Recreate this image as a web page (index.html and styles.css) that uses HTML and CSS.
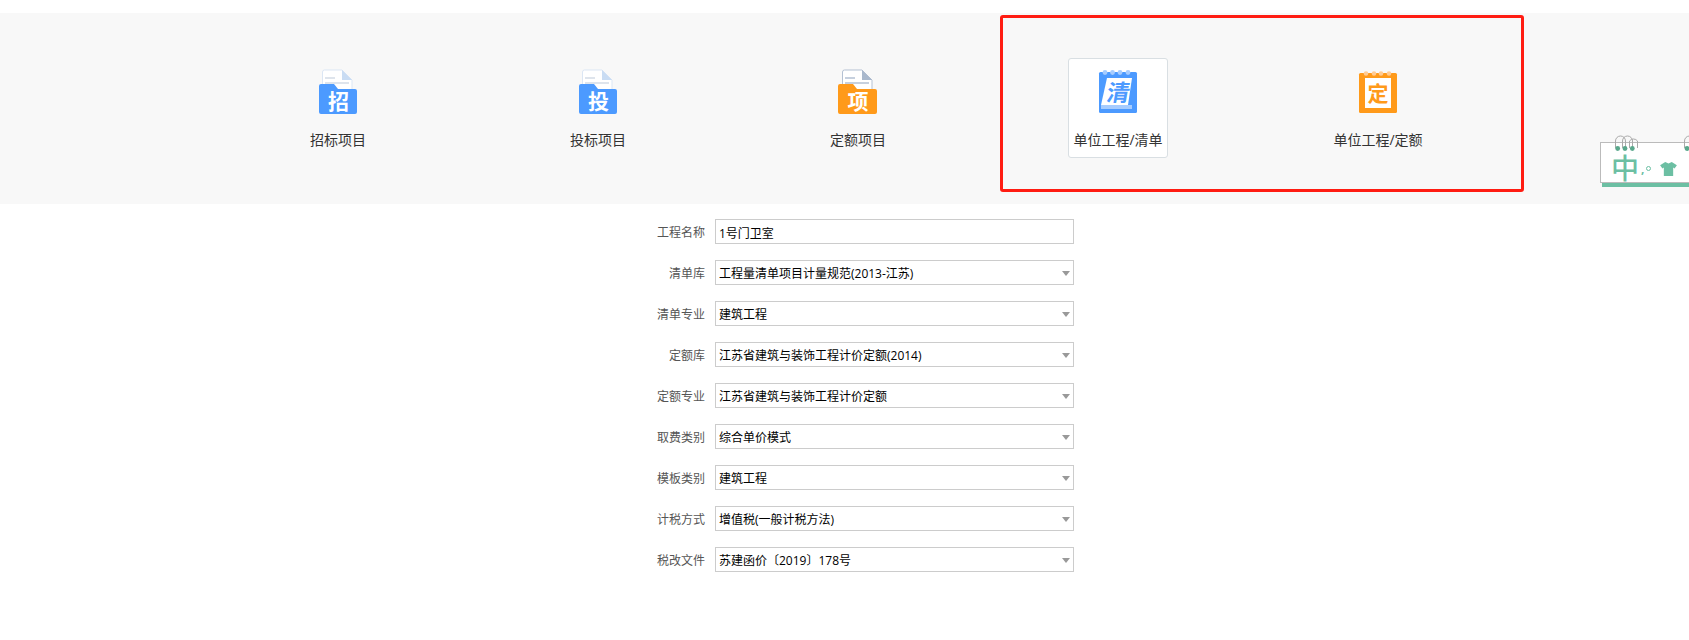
FILE: index.html
```html
<!DOCTYPE html>
<html lang="zh-CN">
<head>
<meta charset="utf-8">
<title>新建工程</title>
<link rel="stylesheet" href="styles.css">
</head>
<body>
<div class="page">
  <section class="band">
    <div class="tabs">
      <div class="tab">
        <svg class="icon" viewBox="0 0 48 48"><g class="folder-art"><path class="doc doc-blue" d="M9.500 4a2 2 0 0 1 2-2H29l10 10v26H9.500z"/><path class="fold fold-blue" d="M29 2l10 10H29z"/><path class="line-blue" d="M12 10h10M12 15h24"/><path class="folder-blue" d="M6 18a2 2 0 0 1 2-2h13l4 5h17a2 2 0 0 1 2 2v21a2 2 0 0 1-2 2H8a2 2 0 0 1-2-2z"/><text class="glyph" x="25.500" y="41">招</text></g></svg>
        <span class="tab-label">招标项目</span>
      </div>
      <div class="tab">
        <svg class="icon" viewBox="0 0 48 48"><g class="folder-art"><path class="doc doc-blue" d="M9.500 4a2 2 0 0 1 2-2H29l10 10v26H9.500z"/><path class="fold fold-blue" d="M29 2l10 10H29z"/><path class="line-blue" d="M12 10h10M12 15h24"/><path class="folder-blue" d="M6 18a2 2 0 0 1 2-2h13l4 5h17a2 2 0 0 1 2 2v21a2 2 0 0 1-2 2H8a2 2 0 0 1-2-2z"/><text class="glyph" x="25.500" y="41">投</text></g></svg>
        <span class="tab-label">投标项目</span>
      </div>
      <div class="tab">
        <svg class="icon" viewBox="0 0 48 48"><g class="folder-art"><path class="doc doc-grey" d="M9.500 4a2 2 0 0 1 2-2H29l10 10v26H9.500z"/><path class="fold fold-grey" d="M29 2l10 10H29z"/><path class="line-grey" d="M12 10h10M12 15h24"/><path class="folder-orange" d="M5 18a2 2 0 0 1 2-2h13l4 5h18a2 2 0 0 1 2 2v21a2 2 0 0 1-2 2H7a2 2 0 0 1-2-2z"/><text class="glyph" x="25" y="41">项</text></g></svg>
        <span class="tab-label">定额项目</span>
      </div>
      <div class="tab tab-active">
        <svg class="icon" viewBox="0 0 48 48"><rect class="book-blue" x="5" y="4" width="38" height="41" rx="1.500"/><g class="rings-blue"><circle cx="11" cy="4.500" r="2.400"/><circle cx="18.500" cy="4.500" r="2.400"/><circle cx="26" cy="4.500" r="2.400"/><circle cx="34" cy="4.500" r="2.400"/></g><path class="under-blue" d="M7 37h31v4H7z"/><path class="page-white" d="M13 10h25l-4 27H7z"/><text class="glyph-blue" transform="translate(23 33) skewX(-10)" x="0" y="0">清</text></svg>
        <span class="tab-label">单位工程/清单</span>
      </div>
      <div class="tab">
        <svg class="icon" viewBox="0 0 48 48"><rect class="book-orange" x="5" y="5" width="38" height="40" rx="1.500"/><g class="rings-orange"><circle cx="12" cy="5.500" r="2.300"/><circle cx="20" cy="5.500" r="2.300"/><circle cx="27" cy="5.500" r="2.300"/><circle cx="35" cy="5.500" r="2.300"/></g><rect class="page-white" x="11" y="10" width="26" height="30"/><text class="glyph-orange" x="24" y="33">定</text></svg>
        <span class="tab-label">单位工程/定额</span>
      </div>
    </div>
  </section>

  <form class="form">
    <div class="row"><label class="row-label">工程名称</label><input class="field" type="text" value="1号门卫室"></div>
    <div class="row"><label class="row-label">清单库</label><div class="select-wrap"><select class="field"><option>工程量清单项目计量规范(2013-江苏)</option></select></div></div>
    <div class="row"><label class="row-label">清单专业</label><div class="select-wrap"><select class="field"><option>建筑工程</option></select></div></div>
    <div class="row"><label class="row-label">定额库</label><div class="select-wrap"><select class="field"><option>江苏省建筑与装饰工程计价定额(2014)</option></select></div></div>
    <div class="row"><label class="row-label">定额专业</label><div class="select-wrap"><select class="field"><option>江苏省建筑与装饰工程计价定额</option></select></div></div>
    <div class="row"><label class="row-label">取费类别</label><div class="select-wrap"><select class="field"><option>综合单价模式</option></select></div></div>
    <div class="row"><label class="row-label">模板类别</label><div class="select-wrap"><select class="field"><option>建筑工程</option></select></div></div>
    <div class="row"><label class="row-label">计税方式</label><div class="select-wrap"><select class="field"><option>增值税(一般计税方法)</option></select></div></div>
    <div class="row"><label class="row-label">税改文件</label><div class="select-wrap"><select class="field"><option>苏建函价〔2019〕178号</option></select></div></div>
  </form>

  <div class="highlight"></div>

  <div class="ime">
    <div class="ime-body">
      <span class="ime-zh">中</span>
      <span class="ime-punct">,</span><span class="ime-o"></span>
      <svg class="ime-shirt" viewBox="0 0 18 15"><path d="M5.500 0 9 1.500 12.500 0 18 3.500 15.500 7 14 6v9H4V6L2.500 7 0 3.500z"/></svg>
    </div>
    <svg class="ime-rings" viewBox="0 0 89 24"><g class="ring"><path d="M15.500 13V6a5 5 0 0 1 10 0v7"/><path d="M22.500 13V6a5 5 0 0 1 10 0v7"/><path d="M29.500 13V6a5 5 0 0 1 8 0v7"/><path d="M84.500 13V6a5 5 0 0 1 10 0v7"/></g><g class="ring-dot"><circle cx="17.700" cy="13.500" r="2.400"/><circle cx="25" cy="13.500" r="2.400"/><circle cx="32.300" cy="13.500" r="2.400"/><circle cx="87" cy="13.500" r="2.400"/></g></svg>
  </div>
</div>
</body>
</html>
```
FILE: styles.css
```css
* { box-sizing: border-box; }
html, body { margin: 0; padding: 0; background: #fff; }
body {
  font-family: "Open Sans", "Noto Sans CJK SC", sans-serif;
  font-size: 12px;
  color: #333;
  overflow: hidden;
}
.page { position: relative; width: 1689px; height: 640px; padding-top: 13px; overflow: hidden; }

.band { height: 191px; background: #f8f8f8; padding: 45px 0 0 208px; }
.tabs { display: grid; grid-template-columns: repeat(5, 260px); }
.tab {
  justify-self: center;
  width: 100px;
  height: 100px;
  padding-top: 9px;
  border: 1px solid transparent;
  border-radius: 3px;
  display: flex;
  flex-direction: column;
  align-items: center;
}
.tab-active { background: #fff; border-color: #d9dfe3; }
.icon { width: 48px; height: 48px; flex: none; display: block; }
.folder-art { transform: translateX(-1px); }
.tab-label { margin-top: 14px; font-size: 14px; line-height: 20px; color: #333; white-space: nowrap; }

.doc { stroke-width: 1; }
.doc-blue { fill: #fff; stroke: #dbe6f4; }
.fold-blue { fill: #c9dcf3; }
.line-blue { stroke: #d3dbe6; stroke-width: 1.500; fill: none; }
.folder-blue { fill: #4c9aff; }
.doc-grey { fill: #fff; stroke: #b4c1d3; }
.fold-grey { fill: #a9b8cc; }
.line-grey { stroke: #b4c1d3; stroke-width: 1.500; fill: none; }
.folder-orange { fill: #ff9a1a; }
.glyph { fill: #fff; font-size: 21px; font-weight: 700; text-anchor: middle; }

.book-blue { fill: #4c9aff; }
.rings-blue circle { fill: #a6ccff; }
.under-blue { fill: #a6ccff; }
.page-white { fill: #fff; }
.glyph-blue { fill: #4c9aff; font-size: 23px; font-weight: 700; text-anchor: middle; }
.book-orange { fill: #ff9a1a; }
.rings-orange circle { fill: #ffcb94; }
.glyph-orange { fill: #ff9a1a; font-size: 21px; font-weight: 700; text-anchor: middle; }

.form { padding: 15px 0 0 645px; display: flex; flex-direction: column; gap: 16px; }
.row { display: flex; align-items: center; gap: 10px; height: 25px; }
.row-label { width: 60px; height: 25px; padding-top: 1px; text-align: right; color: #555; font-size: 12px; line-height: 25px; }
.select-wrap { position: relative; width: 359px; height: 25px; }
.select-wrap::after {
  content: "";
  position: absolute;
  right: 4px;
  top: 11px;
  border-left: 4px solid transparent;
  border-right: 4px solid transparent;
  border-top: 5px solid #999;
}
.field {
  display: block;
  width: 359px;
  height: 25px;
  margin: 0;
  padding: 2px 16px 0 3px;
  border: 1px solid #ccc;
  border-radius: 0;
  background: #fff;
  color: #000;
  font: 12px/21px "Open Sans", "Noto Sans CJK SC", sans-serif;
  outline: none;
  appearance: none;
  -webkit-appearance: none;
}

.highlight {
  position: absolute;
  left: 1000px;
  top: 15px;
  width: 524px;
  height: 177px;
  border: 3px solid #ff1c12;
  border-radius: 3px;
}

.ime { position: absolute; left: 1600px; top: 135px; width: 89px; height: 52px; }
.ime-body {
  position: absolute;
  left: 0;
  top: 7px;
  width: 100px;
  height: 41px;
  background: #fff;
  border: 1px solid #bbb;
  box-shadow: 2px 4px 0 #6cbfa3;
  padding: 12px 0 0 10px;
  color: #6cbfa3;
  display: flex;
  align-items: center;
}
.ime-zh { font-size: 28px; line-height: 27px; font-weight: 500; width: 27px; flex: none; }
.ime-punct { font-size: 12px; font-weight: 700; line-height: 12px; margin-left: 3px; }
.ime-o { width: 5px; height: 5px; border: 1px solid #6cbfa3; border-radius: 50%; margin-left: 2px; }
.ime-shirt { width: 17px; height: 14px; margin-left: 9px; fill: #6cbfa3; flex: none; }
.ime-rings { position: absolute; left: 0; top: 0; width: 89px; height: 24px; overflow: hidden; }
.ring path { fill: none; stroke: #aaa; stroke-width: 1; }
.ring-dot circle { fill: #5aa88c; }
```
